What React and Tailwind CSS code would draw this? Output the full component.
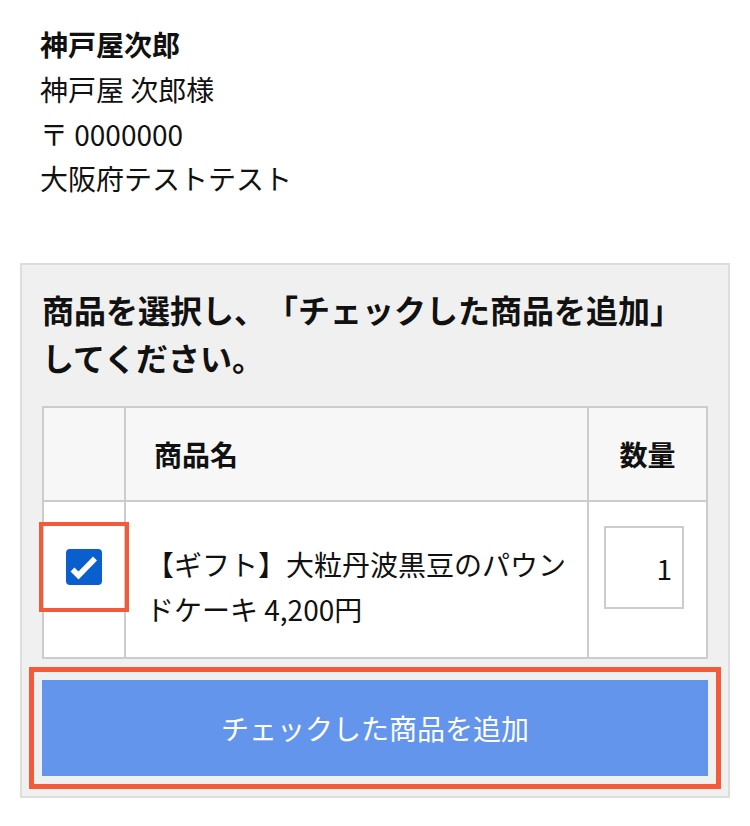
import React from "react";

const font = { fontFamily: '"Noto Sans CJK JP", "Noto Sans", sans-serif' };

export default function App() {
  return (
    <div
      className="w-[750px] min-h-[826px] bg-white px-[20px] pt-[22px] pb-[28px] text-[#111] [text-spacing-trim:space-all]"
      style={font}
    >
      {/* お届け先 */}
      <div className="px-[20px] text-[28px] leading-[1.6]">
        <p className="font-bold">神戸屋次郎</p>
        <p>神戸屋 次郎様</p>
        <p>〒 0000000</p>
        <p>大阪府テストテスト</p>
      </div>

      <div className="mt-[62px] border-2 border-[#ddd] bg-[#f0f0f0] p-[20px]">
        <h2 className="text-[32px] font-bold leading-[1.5]">
          商品を選択し、「チェックした商品を追加」してください。
        </h2>

        <div className="mt-[25px] grid grid-cols-[80px_1fr_117px] gap-[2px] bg-[#ccc] p-[2px]">
          <div className="h-[92px] bg-[#f7f7f7]"></div>
          <div className="flex h-[92px] items-center bg-[#f7f7f7] pl-[28px] text-[28px] font-bold">商品名</div>
          <div className="flex h-[92px] items-center justify-center bg-[#f7f7f7] text-[28px] font-bold">数量</div>

          <div className="h-[155px] bg-white pt-[47px]">
            <div className="relative z-10 mx-auto h-[36px] w-[36px] outline-[4px] outline-solid outline-[#f4593a] outline-offset-[23px]">
              <div className="h-[36px] w-[36px] rounded-[4px] bg-[#0a5fce]">
                <svg width="36" height="36" viewBox="0 0 36 36">
                  <polyline points="6.5,20.5 12.5,26.5 29,9.5" fill="none" stroke="white" strokeWidth="5.5" />
                </svg>
              </div>
            </div>
          </div>
          <div className="h-[155px] bg-white pl-[20px] pr-[20px] pt-[40px] text-[28px] leading-[1.6]">
            【ギフト】大粒丹波黒豆のパウンドケーキ 4,200円
          </div>
          <div className="h-[155px] bg-white pl-[15px] pt-[24px]">
            <input
              type="text"
              readOnly
              value="1"
              className="h-[83px] w-[80px] border-2 border-[#ccc] bg-white pr-[10px] text-right text-[28px]"
            />
          </div>
        </div>

        <button className="mt-[21px] flex h-[96px] w-full items-center justify-center bg-[#6495ed] text-[28px] text-white outline-[5px] outline-solid outline-[#f4593a] outline-offset-[8px]">
          チェックした商品を追加
        </button>
      </div>
    </div>
  );
}
